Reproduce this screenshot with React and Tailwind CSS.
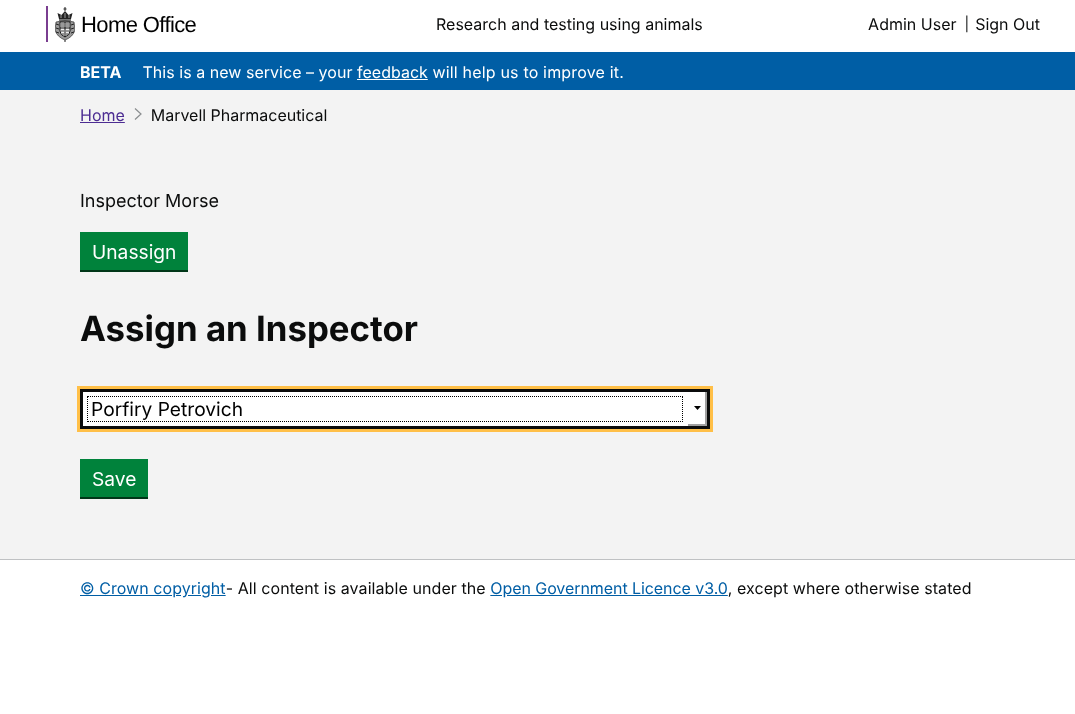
import React from 'react';

const font = { fontFamily: 'Inter, "Noto Sans", sans-serif' };

// rough royal crest, only readable at logo size
const Crest = () => (
  <svg width="20" height="35" viewBox="0 0 20 35" className="block">
    <path d="M10 0v4M8.5 2h3" stroke="#222" strokeWidth="1" fill="none" />
    <path d="M4 12 L2.5 6 L6.5 8 L10 4 L13.5 8 L17.5 6 L16 12 Z" fill="#222" />
    <path d="M6 8v3M10 6v5M14 8v3" stroke="#999" strokeWidth="1" />
    <rect x="4" y="12" width="12" height="2" fill="#777" />
    <path d="M1 15 Q10 12 19 15 L20 23 Q18 30 10 33 Q2 30 0 23 Z" fill="#9a9a9a" stroke="#333" strokeWidth="0.7" />
    <path d="M5 15h10v9q0 4-5 6-5-2-5-6z" fill="#eee" stroke="#111" strokeWidth="1" />
    <path d="M10 15v15M5 21h10" stroke="#111" strokeWidth="1" />
    <path d="M6 17h3M11 17h3M6 19h3M11 19h3M6 24h3M11 24h3M7 27h2M11 27h2" stroke="#444" strokeWidth="1" />
    <path d="M1 17l3 1M1 21l3 1M1 25l3 1M19 17l-3 1M19 21l-3 1M19 25l-3 1" stroke="#222" strokeWidth="1" />
    <path d="M10 33v2" stroke="#222" strokeWidth="1" />
  </svg>
);

const GreenButton = ({ children }) => (
  <button className="block h-10 bg-[#00823b] px-3 pt-[2px] text-[19.2px] leading-[25px] text-white border-b-2 border-[#003618]">
    {children}
  </button>
);

const Header = () => (
  <header className="flex h-[52px] items-center justify-between bg-white pl-[46px] pr-[35px]">
    <div className="flex h-9 items-center border-l-2 border-[#7a3e90] pl-[7px] mt-[-4px]">
      <Crest />
      <span className="ml-[6px] mt-[2px] text-[22px] leading-none tracking-[-0.6px] text-black font-normal" style={{ fontFamily: '"Liberation Sans", sans-serif' }}>
        Home Office
      </span>
    </div>
    <div className="absolute left-[436px] top-[14px] text-base leading-[21px] text-[#0b0c0c]">Research and testing using animals</div>
    <div className="flex items-center text-base leading-[21px] text-[#0b0c0c] mt-[-3px]">
      <span>Admin User</span>
      <span className="ml-2 text-sm">|</span>
      <span className="ml-[6px]">Sign Out</span>
    </div>
  </header>
);

const FakeSelect = () => (
  <div className="h-[46px] w-[636px] ml-[-3px] border-[3px] border-[#ffbf47]">
    <div className="flex h-10 w-[630px] border-[3px] border-[#0b0c0c] bg-white">
      <div className="mt-1 ml-1 h-[26px] w-[596px] border border-dotted border-black pl-[3px] text-[19.2px] leading-[25px] text-black">
        Porfiry Petrovich
      </div>
      <div className="relative ml-[5px] flex h-[34px] w-[19px] items-center justify-center border-r-2 border-b-2 border-[#a0a0a0]">
        <svg width="7" height="4" viewBox="0 0 7 4" className="block ml-[1px]">
          <path d="M0 0h7L3.5 4z" fill="#000" />
        </svg>
      </div>
    </div>
  </div>
);

export default function App() {
  return (
    <div className="min-h-[714px] bg-white [text-rendering:geometricPrecision] will-change-transform" style={font}>
      <Header />

      <div className="flex h-[38px] items-center bg-[#005ea5] px-20 pt-[2px] text-base text-white">
        <strong className="font-bold">BETA</strong>
        <span className="ml-[21px]">
          <span className="tracking-[0.03px]">This is a new service – your </span>
          <a className="underline" href="#">feedback</a>
          <span className="tracking-[0.18px]"> will help us to improve it.</span>
        </span>
      </div>

      <main className="h-[469px] bg-[#f3f3f3] px-20 border-b border-[#bfc1c3] box-content">
        <nav className="flex items-center pt-[15px] text-base leading-[21px]">
          <a className="text-[#4c2c92] underline" href="#">Home</a>
          <svg width="10" height="14" viewBox="0 0 10 14" className="ml-2 mr-[8px] mt-[-3px]">
            <path d="M2 1.5 L8 7 L2 12.5" stroke="#8a8d8f" strokeWidth="1.2" fill="none" />
          </svg>
          <span className="text-[#0b0c0c] tracking-[-0.03px]">Marvell Pharmaceutical</span>
        </nav>

        <p className="mt-[63px] text-lg leading-[25px] text-[#0b0c0c]">Inspector Morse</p>
        <div className="mt-[18px]">
          <GreenButton>Unassign</GreenButton>
        </div>

        <h1 className="mt-[32px] text-[34.8px] font-bold leading-[50px] text-[#0b0c0c]">Assign an Inspector</h1>

        <div className="mt-[32px]">
          <FakeSelect />
        </div>

        <div className="mt-[27px]">
          <GreenButton>Save</GreenButton>
        </div>
      </main>

      <footer className="px-20 pt-[18px] text-base leading-[21px] text-[#0b0c0c]">
        <a className="text-[#005ea5] underline tracking-[0.05px]" href="#">© Crown copyright</a>
        <span className="tracking-[0.08px]">- All content is available under the </span>
        <a className="text-[#005ea5] underline tracking-[-0.07px]" href="#">Open Government Licence v3.0</a>
        <span className="tracking-[0.06px]">, except where otherwise stated</span>
      </footer>
    </div>
  );
}
